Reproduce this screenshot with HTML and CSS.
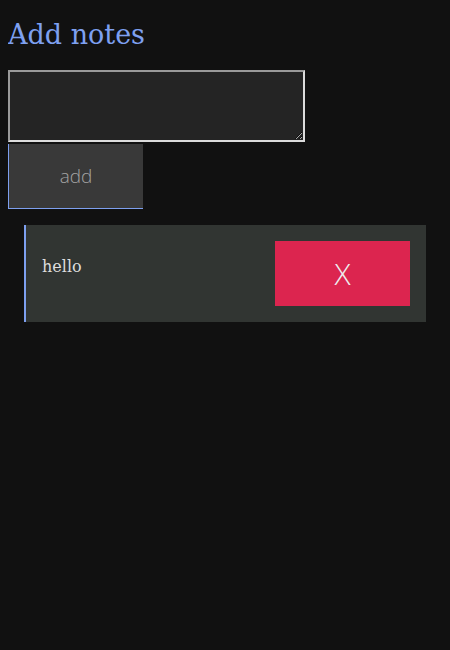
FILE: index.html
```html
<!DOCTYPE html>
<html>
<head>
<meta charset="utf-8">
<link rel="stylesheet" href="styles.css">
</head>
<body>
<h1 class="title">Add notes</h1>
<div class="form">
  <textarea class="input"></textarea>
  <button class="add">add</button>
</div>
<div class="notes">
  <div class="note">
    <p class="note-text">hello</p>
    <button class="del">X</button>
  </div>
</div>
</body>
</html>
```

FILE: styles.css
```css
html, body {
  background: #111111;
}
body {
  margin: 8px;
  font-family: "DejaVu Serif", serif;
}
.title {
  margin: 0;
  padding-top: 12px;
  font-size: 27px;
  font-weight: normal;
  line-height: 30px;
  color: #7ea0f0;
}
.form {
  margin-top: 20px;
  display: flex;
  flex-direction: column;
  gap: 2px;
}
.input {
  box-sizing: border-box;
  width: 297px;
  height: 72px;
  margin: 0;
  background: #242424;
  border: 2px solid;
  border-color: #9a9a9a #dcdcdc #dcdcdc #9a9a9a;
  color: #ddd;
}
.add {
  box-sizing: border-box;
  width: 135px;
  height: 65px;
  margin: 0;
  background: #393939;
  border: none;
  border-left: 1px solid #7ea0f0;
  border-bottom: 1px solid #7ea0f0;
  color: #a4a4a4;
  font-family: "Open Sans", sans-serif;
  font-weight: 300;
  font-size: 19px;
}
.notes {
  margin: 16px 16px 0;
}
.note {
  display: flex;
  justify-content: space-between;
  align-items: flex-start;
  background: #313532;
  border-left: 2px solid #7ea0f0;
  padding: 16px;
}
.note-text {
  margin: 16px 0 0;
  color: #dddddd;
  font-size: 16px;
}
.del {
  width: 135px;
  height: 65px;
  margin: 0;
  border: none;
  background: #dc254f;
  color: #eeeeee;
  font-family: "Open Sans", sans-serif;
  font-weight: 300;
  font-size: 30px;
}
```
